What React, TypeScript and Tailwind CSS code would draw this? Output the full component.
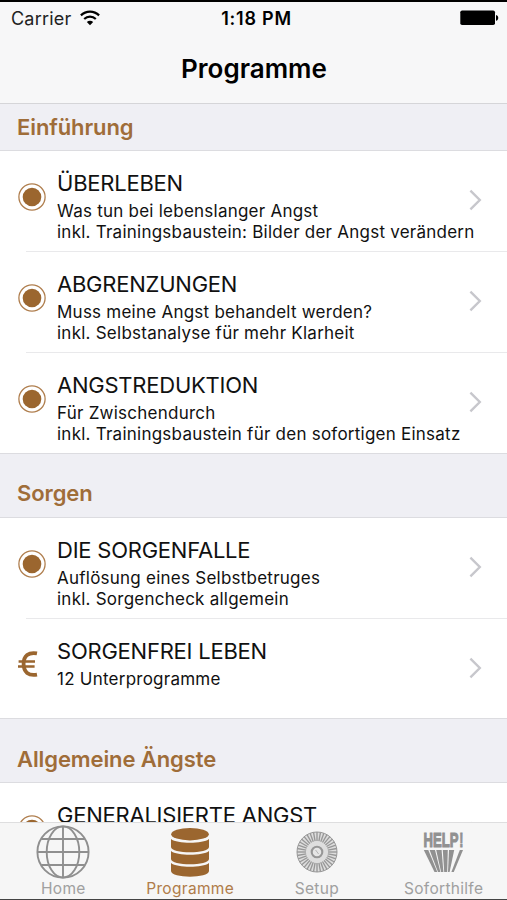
import React from "react";
import clsx from "clsx";

interface Program {
  title: string;
  lines: string[];
  paid?: boolean;
}

interface Section {
  name: string;
  headerClass: string;
  programs: Program[];
}

const sections: Section[] = [
  {
    name: "Einführung",
    headerClass: "h-[47px] pb-[8px]",
    programs: [
      {
        title: "ÜBERLEBEN",
        lines: [
          "Was tun bei lebenslanger Angst",
          "inkl. Trainingsbaustein: Bilder der Angst verändern",
        ],
      },
      {
        title: "ABGRENZUNGEN",
        lines: [
          "Muss meine Angst behandelt werden?",
          "inkl. Selbstanalyse für mehr Klarheit",
        ],
      },
      {
        title: "ANGSTREDUKTION",
        lines: [
          "Für Zwischendurch",
          "inkl. Trainingsbaustein für den sofortigen Einsatz",
        ],
      },
    ],
  },
  {
    name: "Sorgen",
    headerClass: "h-[65px] border-t pb-[9px]",
    programs: [
      {
        title: "DIE SORGENFALLE",
        lines: ["Auflösung eines Selbstbetruges", "inkl. Sorgencheck allgemein"],
      },
      { title: "SORGENFREI LEBEN", lines: ["12 Unterprogramme"], paid: true },
    ],
  },
  {
    name: "Allgemeine Ängste",
    headerClass: "h-[65px] border-t pb-[8px]",
    programs: [{ title: "GENERALISIERTE ANGST", lines: [] }],
  },
];

const WifiIcon = () => (
  <svg width="20" height="16" viewBox="0 0 20 16" fill="none" stroke="#000" strokeWidth="2.2">
    <path d="M0.9 5.4 C6 0.3 14 0.3 19.1 5.4" />
    <path d="M4.2 9 C7.5 5.8 12.5 5.8 15.8 9" />
    <path d="M10 15.2 L6.8 11.9 C8.6 10.2 11.4 10.2 13.2 11.9 Z" fill="#000" stroke="none" />
  </svg>
);

const BatteryIcon = () => (
  <svg width="39" height="16" viewBox="0 0 39 16">
    <rect x="0.3" y="0.5" width="34.7" height="14.6" rx="1.8" fill="#000" />
    <path d="M36 5 C39 5.6 39 10.2 36 10.8 Z" fill="#000" />
  </svg>
);

const DotIcon = () => (
  <svg width="28" height="28" viewBox="0 0 28 28" fill="none">
    <circle cx="14" cy="14" r="13.1" stroke="#b07f4f" strokeWidth="1.3" />
    <circle cx="14" cy="14" r="9.3" fill="#9b662f" />
  </svg>
);

const EuroIcon = () => (
  <svg width="20" height="28" viewBox="0 -1 20 28" fill="none" stroke="#9b662f">
    <path d="M19 2.4 C10.5 0.8 5.6 5 5.6 13 C5.6 21 10.5 25.2 19 23.6" strokeWidth="3.8" />
    <path d="M0.6 10.6 H17 M0 15.4 H16.6" strokeWidth="2.5" />
  </svg>
);

const ChevronIcon = () => (
  <svg width="14" height="22" viewBox="0 0 14 22" fill="none" stroke="#c7c7cc" strokeWidth="2.4">
    <path d="M1.4 1.6 L10.8 11 L1.4 20.4" />
  </svg>
);

const GlobeIcon = () => (
  <svg width="54" height="54" viewBox="0 0 54 54" fill="none" stroke="#8f8f8f" strokeWidth="1.9">
    <circle cx="27" cy="27" r="25.6" />
    <ellipse cx="27" cy="27" rx="16.3" ry="25.6" />
    <path d="M27 1.4 V52.6 M1.4 27 H52.6 M5.2 14 H48.8 M5.2 40 H48.8" />
  </svg>
);

const DatabaseIcon = () => (
  <svg width="38" height="49" viewBox="0 0 38 49" fill="#9b662f">
    <ellipse cx="19" cy="6.2" rx="18.8" ry="6.2" />
    <path d="M0 11 C6 16 32 16 38 11 V19 C38 26 0 26 0 19 Z" />
    <path d="M0 23 C6 28 32 28 38 23 V31 C38 38 0 38 0 31 Z" />
    <path d="M0 35 C6 40 32 40 38 35 V43 C38 50.5 0 50.5 0 43 Z" />
  </svg>
);

const WheelIcon = () => (
  <svg width="42" height="42" viewBox="0 0 42 42" fill="none" stroke="#979797">
    <circle cx="21" cy="21" r="20" fill="#dedede" strokeWidth="1" />
    {Array.from({ length: 36 }, (_, i) => (
      <path key={i} d="M21 1 V10" strokeWidth="1.35" transform={`rotate(${i * 10} 21 21)`} />
    ))}
    <circle cx="21" cy="21" r="5.3" fill="#e6e6e6" strokeWidth="2.1" />
    <path d="M19.6 19 L22.6 23" strokeWidth="1" stroke="#b5b5b5" />
  </svg>
);

const HelpIcon = () => (
  <svg width="42" height="42" viewBox="0 0 42 42" fill="#919191">
    <g
      fontFamily="'Liberation Sans', Arial, sans-serif"
      fontWeight="700"
      fontSize="21"
      stroke="#919191"
      transform="scale(0.6 1)"
    >
      <text x="1" y="16" textLength="58" lengthAdjust="spacingAndGlyphs" strokeWidth="1.2">
        HELP
      </text>
      <text x="60.5" y="16" strokeWidth="0.9">
        !
      </text>
    </g>
    <path d="M0.8 19 H5.3 L14.3 41 H11.5 Z" />
    <path d="M6.6 19 H12 L17.4 41 H15 Z" />
    <path d="M13.2 19 H18.6 L20.4 41 H18.1 Z" />
    <path d="M19.8 19 H24.8 L24.2 41 H21.2 Z" />
    <path d="M26 19 H31.2 L26.6 41 H25 Z" />
    <path d="M36.8 19 H40 L30.8 41 H28.4 Z" />
  </svg>
);

const tabs = [
  { label: "Home", icon: <GlobeIcon /> },
  { label: "Programme", icon: <DatabaseIcon />, active: true },
  { label: "Setup", icon: <WheelIcon /> },
  { label: "Soforthilfe", icon: <HelpIcon /> },
];

const ProgramRow = ({ program, last }: { program: Program; last: boolean }) => (
  <div className="shrink-0">
    <div className={clsx("flex", program.paid ? "h-[99px]" : "h-[100px]")}>
      <div
        className={clsx("w-[57px] shrink-0 pl-[18px]", program.paid ? "pt-[31px]" : "pt-[32px]")}
      >
        {program.paid ? <EuroIcon /> : <DotIcon />}
      </div>
      <div className="w-[412px] shrink-0 pt-[19px] whitespace-nowrap text-[#111]">
        <h3 className="text-[22px] leading-[26px] tracking-[-0.23px]">{program.title}</h3>
        <div className="mt-[5px] text-[17px] leading-[21px] tracking-[0.24px]">
          {program.lines.map((line) => (
            <p key={line}>{line}</p>
          ))}
        </div>
      </div>
      <div className="pt-[38px]">
        <ChevronIcon />
      </div>
    </div>
    {!last && <div className="ml-[26px] h-px bg-[#e9e9eb]" />}
  </div>
);

export default function App() {
  return (
    <div className="flex h-[900px] w-[507px] flex-col overflow-hidden border-t-2 border-b border-t-black border-b-[#444] bg-white font-['Inter','Liberation_Sans',sans-serif]">
      <header className="h-[102px] shrink-0 border-b border-[#d5d5d8] bg-[#f7f7f8]">
        <div className="grid h-[32px] grid-cols-3 items-center pr-[8px] pl-[11px] text-[18px]">
          <div className="flex items-center gap-[9px] tracking-[0.2px] text-[#222]">
            <span>Carrier</span>
            <WifiIcon />
          </div>
          <span className="pl-[3px] text-center font-semibold tracking-[0.75px]">1:18 PM</span>
          <div className="flex justify-end">
            <BatteryIcon />
          </div>
        </div>
        <h1 className="mt-[17px] pl-px text-center text-[26px] leading-[36px] font-semibold">
          Programme
        </h1>
      </header>

      <main className="flex min-h-0 flex-1 flex-col overflow-hidden">
        {sections.map((section) => (
          <React.Fragment key={section.name}>
            <h2
              className={clsx(
                "flex shrink-0 items-end border-b border-[#dcdce0] bg-[#efeff4] pl-[17px] text-[22px] leading-[30px] font-semibold tracking-[-0.1px] text-[#9f6d39]",
                section.headerClass
              )}
            >
              {section.name}
            </h2>
            {section.programs.map((program, i) => (
              <ProgramRow
                key={program.title}
                program={program}
                last={i === section.programs.length - 1}
              />
            ))}
          </React.Fragment>
        ))}
      </main>

      <nav className="grid h-[77px] shrink-0 grid-cols-4 border-t border-[#dededf] bg-[#f6f6f6]">
        {tabs.map((tab) => (
          <div key={tab.label} className="flex flex-col items-center">
            <div className="flex h-[58px] items-center">{tab.icon}</div>
            <span
              className={clsx(
                "text-[15.5px] leading-[16px] tracking-[0.3px]",
                tab.active ? "text-[#b07c49]" : "text-[#a0a0a0]"
              )}
            >
              {tab.label}
            </span>
          </div>
        ))}
      </nav>
    </div>
  );
}
